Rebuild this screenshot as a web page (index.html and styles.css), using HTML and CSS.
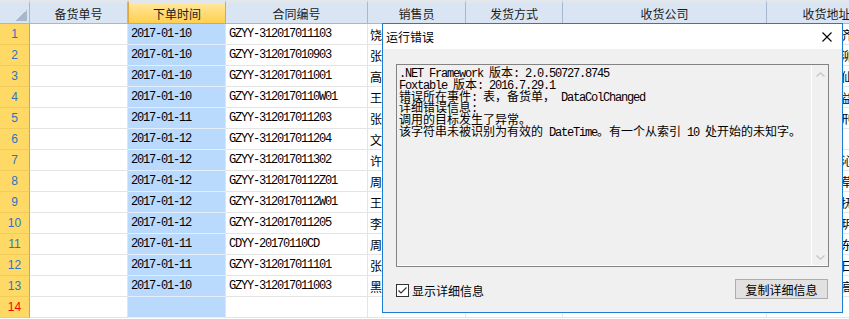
FILE: index.html
```html
<!DOCTYPE html>
<html lang="zh-CN">
<head>
  <meta charset="UTF-8" />
  <meta name="viewport" content="width=device-width, initial-scale=1.0" />
  <title>备货单</title>
  <link rel="stylesheet" href="styles.css">
</head>
<body>
  <div class="sheet">
    <table class="grid">
      <colgroup>
        <col class="w-num">
        <col class="w-98">
        <col class="w-98">
        <col class="w-142">
        <col class="w-98">
        <col class="w-97">
        <col class="w-204">
        <col class="w-120">
      </colgroup>
      <thead>
        <tr>
          <th class="corner"></th>
          <th>备货单号</th>
          <th class="sel">下单时间</th>
          <th>合同编号</th>
          <th>销售员</th>
          <th>发货方式</th>
          <th>收货公司</th>
          <th>收货地址</th>
        </tr>
      </thead>
      <tbody id="rows"></tbody>
    </table>

    <div class="dialog">
      <div class="title-bar">
        <span class="title">运行错误</span>
        <svg class="close" width="10" height="10" viewBox="0 0 10 10">
          <path d="M0.5 0.5 L9.5 9.5 M9.5 0.5 L0.5 9.5" stroke="#000" stroke-width="1.1" fill="none"/>
        </svg>
      </div>
      <div class="dialog-body">
        <div class="textbox">
          <div class="text">
            <div class="line">.NET Framework <span class="cn">版本</span>: 2.0.50727.8745</div>
            <div class="line">Foxtable <span class="cn">版本</span>: 2016.7.29.1</div>
            <div class="line"><span class="cn">错误所在事件</span>: <span class="cn">表，备货单，</span> DataColChanged</div>
            <div class="line"><span class="cn">详细错误信息</span>:</div>
            <div class="line"><span class="cn">调用的目标发生了异常。</span></div>
            <div class="line"><span class="cn">该字符串未被识别为有效的</span> DateTime<span class="cn">。有一个从索引</span> 10 <span class="cn">处开始的未知字。</span></div>
          </div>
          <div class="scrollbar">
            <svg width="9" height="5" viewBox="0 0 9 5"><path d="M0.5 4.5 L4.5 0.8 L8.5 4.5" stroke="#c6c6c6" stroke-width="1.3" fill="none"/></svg>
            <svg width="9" height="5" viewBox="0 0 9 5"><path d="M0.5 0.5 L4.5 4.2 L8.5 0.5" stroke="#c6c6c6" stroke-width="1.3" fill="none"/></svg>
          </div>
        </div>
        <div class="footer">
          <label class="check">
            <svg class="box" width="13" height="13" viewBox="0 0 13 13">
              <rect x="0.5" y="0.5" width="12" height="12" fill="#fff" stroke="#333"/>
              <path d="M2.5 6.5 L5 9 L10.5 3.5" stroke="#333" stroke-width="1.2" fill="none"/>
            </svg>
            显示详细信息
          </label>
          <button class="btn">复制详细信息</button>
        </div>
      </div>
    </div>
  </div>

  <script>
    const linhas = [
      { data: '2017-01-10', contrato: 'GZYY-312017011103', vendedor: '饶建华', envio: '物流', empresa: '广州百草堂药业有限公司', endereco: '广东省广州市齐富路' },
      { data: '2017-01-10', contrato: 'GZYY-312017010903', vendedor: '张伟', envio: '快递', empresa: '苏州康宁医药公司', endereco: '江苏省苏州市泖港镇' },
      { data: '2017-01-10', contrato: 'GZYY-312017011001', vendedor: '高明', envio: '物流', empresa: '厦门仁和药房', endereco: '福建省厦门市仙岳路' },
      { data: '2017-01-10', contrato: 'GZYY-3120170110W01', vendedor: '王芳', envio: '自提', empresa: '长沙益康医药', endereco: '湖南省长沙市益阳路' },
      { data: '2017-01-11', contrato: 'GZYY-312017011203', vendedor: '张磊', envio: '物流', empresa: '郑州华信药业', endereco: '河南省郑州市刑台路' },
      { data: '2017-01-12', contrato: 'GZYY-312017011204', vendedor: '文静', envio: '快递', empresa: '', endereco: '' },
      { data: '2017-01-12', contrato: 'GZYY-312017011302', vendedor: '许强', envio: '物流', empresa: '长治沁源医药', endereco: '山西省长治市沁源县' },
      { data: '2017-01-12', contrato: 'GZYY-3120170112Z01', vendedor: '周洁', envio: '物流', empresa: '武汉草本堂', endereco: '湖北省武汉市草埠街' },
      { data: '2017-01-12', contrato: 'GZYY-3120170112W01', vendedor: '王军', envio: '快递', empresa: '南昌抚河药店', endereco: '江西省南昌市抚河路' },
      { data: '2017-01-12', contrato: 'GZYY-312017011205', vendedor: '李娜', envio: '物流', empresa: '上海玥城医药', endereco: '上海市浦东新玥城' },
      { data: '2017-01-11', contrato: 'CDYY-20170110CD', vendedor: '周涛', envio: '物流', empresa: '成都东方药业', endereco: '四川省成都市东大街' },
      { data: '2017-01-11', contrato: 'GZYY-312017011101', vendedor: '张敏', envio: '快递', empresa: '日照康泰药房', endereco: '山东省日照市日照路' },
      { data: '2017-01-10', contrato: 'GZYY-312017011003', vendedor: '黑涛', envio: '物流', empresa: '深圳高新医药', endereco: '广东省深圳市高新园' }
    ];

    const corpo = document.getElementById('rows');
    linhas.forEach((l, i) => {
      corpo.innerHTML += `
        <tr>
          <td class="num">${i + 1}</td>
          <td></td>
          <td class="date mono">${l.data}</td>
          <td class="mono">${l.contrato}</td>
          <td class="cjk">${l.vendedor}</td>
          <td class="cjk">${l.envio}</td>
          <td class="cjk">${l.empresa}</td>
          <td class="cjk">${l.endereco}</td>
        </tr>`;
    });
    corpo.innerHTML += `
      <tr class="new">
        <td class="num">${linhas.length + 1}</td>
        <td></td><td class="date"></td><td></td><td></td><td></td><td></td><td></td>
      </tr>`;
  </script>
</body>
</html>
```

FILE: styles.css
```css
:root {
  --head-bg: #d9e5f3;
  --head-line: #a7b8ce;
  --yellow: #ffd966;
  --orange: #d9a23a;
  --sel-blue: #b9dafc;
  --cell-line: #e4e4e4;
  --accent: #1a7fd4;
  --dlg-bg: #f0f0f0;
}

* {
  box-sizing: border-box;
}

body {
  margin: 0;
  overflow: hidden;
  background: #fff;
  font-family: "Noto Sans CJK SC", sans-serif;
  color: #000;
}

.sheet {
  position: relative;
  width: 849px;
  height: 319px;
  overflow: hidden;
}

.grid {
  table-layout: fixed;
  border-collapse: separate;
  border-spacing: 0;
  width: 872px;
}

.w-num { width: 30px; }
.w-98 { width: 98px; }
.w-97 { width: 97px; }
.w-142 { width: 142px; }
.w-204 { width: 204px; }
.w-120 { width: 120px; }

.grid th {
  height: 24px;
  padding: 0;
  border-top: 3px solid #e2e7ee;
  border-right: 1px solid var(--head-line);
  border-bottom: 1px solid var(--head-line);
  background: var(--head-bg);
  font-size: 12px;
  font-weight: normal;
  color: #1a1a1a;
  text-align: center;
  white-space: nowrap;
}

.grid th.corner {
  background-image: linear-gradient(to bottom right, transparent 50%, #a9b7ca 50%);
  background-size: 11px 11px;
  background-position: right 2px bottom 2px;
  background-repeat: no-repeat;
}

.grid th.sel {
  background: linear-gradient(#ffe79c, #ffd050);
  border-left: 1px solid #e3a63c;
  border-right: 1px solid #e3a63c;
  border-bottom: 1px solid #e3a63c;
}

.grid td {
  height: 21px;
  padding: 0 0 0 2px;
  border-right: 1px solid var(--cell-line);
  border-bottom: 1px solid var(--cell-line);
  white-space: nowrap;
  overflow: hidden;
}

.grid td.num {
  padding: 0;
  background: var(--yellow);
  border-right: 1px solid var(--orange);
  border-bottom: 1px solid #f2cd5c;
  font: 12px "Liberation Sans", sans-serif;
  color: #2e73c4;
  text-align: center;
}

.grid tr.new td.num {
  color: #f00;
}

.grid td.date {
  background: var(--sel-blue);
  border-bottom-color: #e3effc;
  padding-left: 3px;
}

.mono {
  font: 12px "Liberation Mono", monospace;
  letter-spacing: -1.2px;
}

.grid td.mono {
  padding-left: 3px;
}

.cjk {
  font-size: 12px;
}

/* dialog */

.dialog {
  position: absolute;
  left: 382px;
  top: 23px;
  width: 461px;
  height: 290px;
  border: 1px solid var(--accent);
  background: var(--dlg-bg);
  display: flex;
  flex-direction: column;
}

.title-bar {
  height: 25px;
  background: #fff;
  display: flex;
  align-items: center;
  justify-content: space-between;
  padding: 0 10px 0 3px;
}

.title {
  font-size: 12px;
}

.close {
  display: block;
}

.dialog-body {
  padding: 15px 13px 0 13px;
}

.textbox {
  height: 203px;
  border: 1px solid #838383;
  box-shadow: inset 0 -1px 0 #fff;
  display: flex;
}

.text {
  flex: 1;
  padding: 4px 2px;
  font: 12px "Liberation Mono", monospace;
  letter-spacing: -1.2px;
}

.line {
  height: 11.8px;
  line-height: 11.8px;
  white-space: pre;
}

.line .cn {
  font: 12px "Noto Sans CJK SC", sans-serif;
  letter-spacing: 0;
  line-height: 0;
}

.scrollbar {
  width: 17px;
  border-left: 1px solid #fff;
  display: flex;
  flex-direction: column;
  justify-content: space-between;
  align-items: center;
  padding: 7px 0 6px;
}

.scrollbar svg {
  display: block;
}

.footer {
  margin-top: 12px;
  display: flex;
  align-items: center;
  justify-content: space-between;
  padding-right: 1px;
}

.check {
  display: flex;
  align-items: center;
  gap: 3px;
  margin-top: 3px;
  font-size: 12px;
}

.box {
  display: block;
}

.btn {
  width: 93px;
  height: 20px;
  padding: 0;
  border: 1px solid #adadad;
  background: #e1e1e1;
  font: 12px "Noto Sans CJK SC", sans-serif;
  color: #000;
}
```
